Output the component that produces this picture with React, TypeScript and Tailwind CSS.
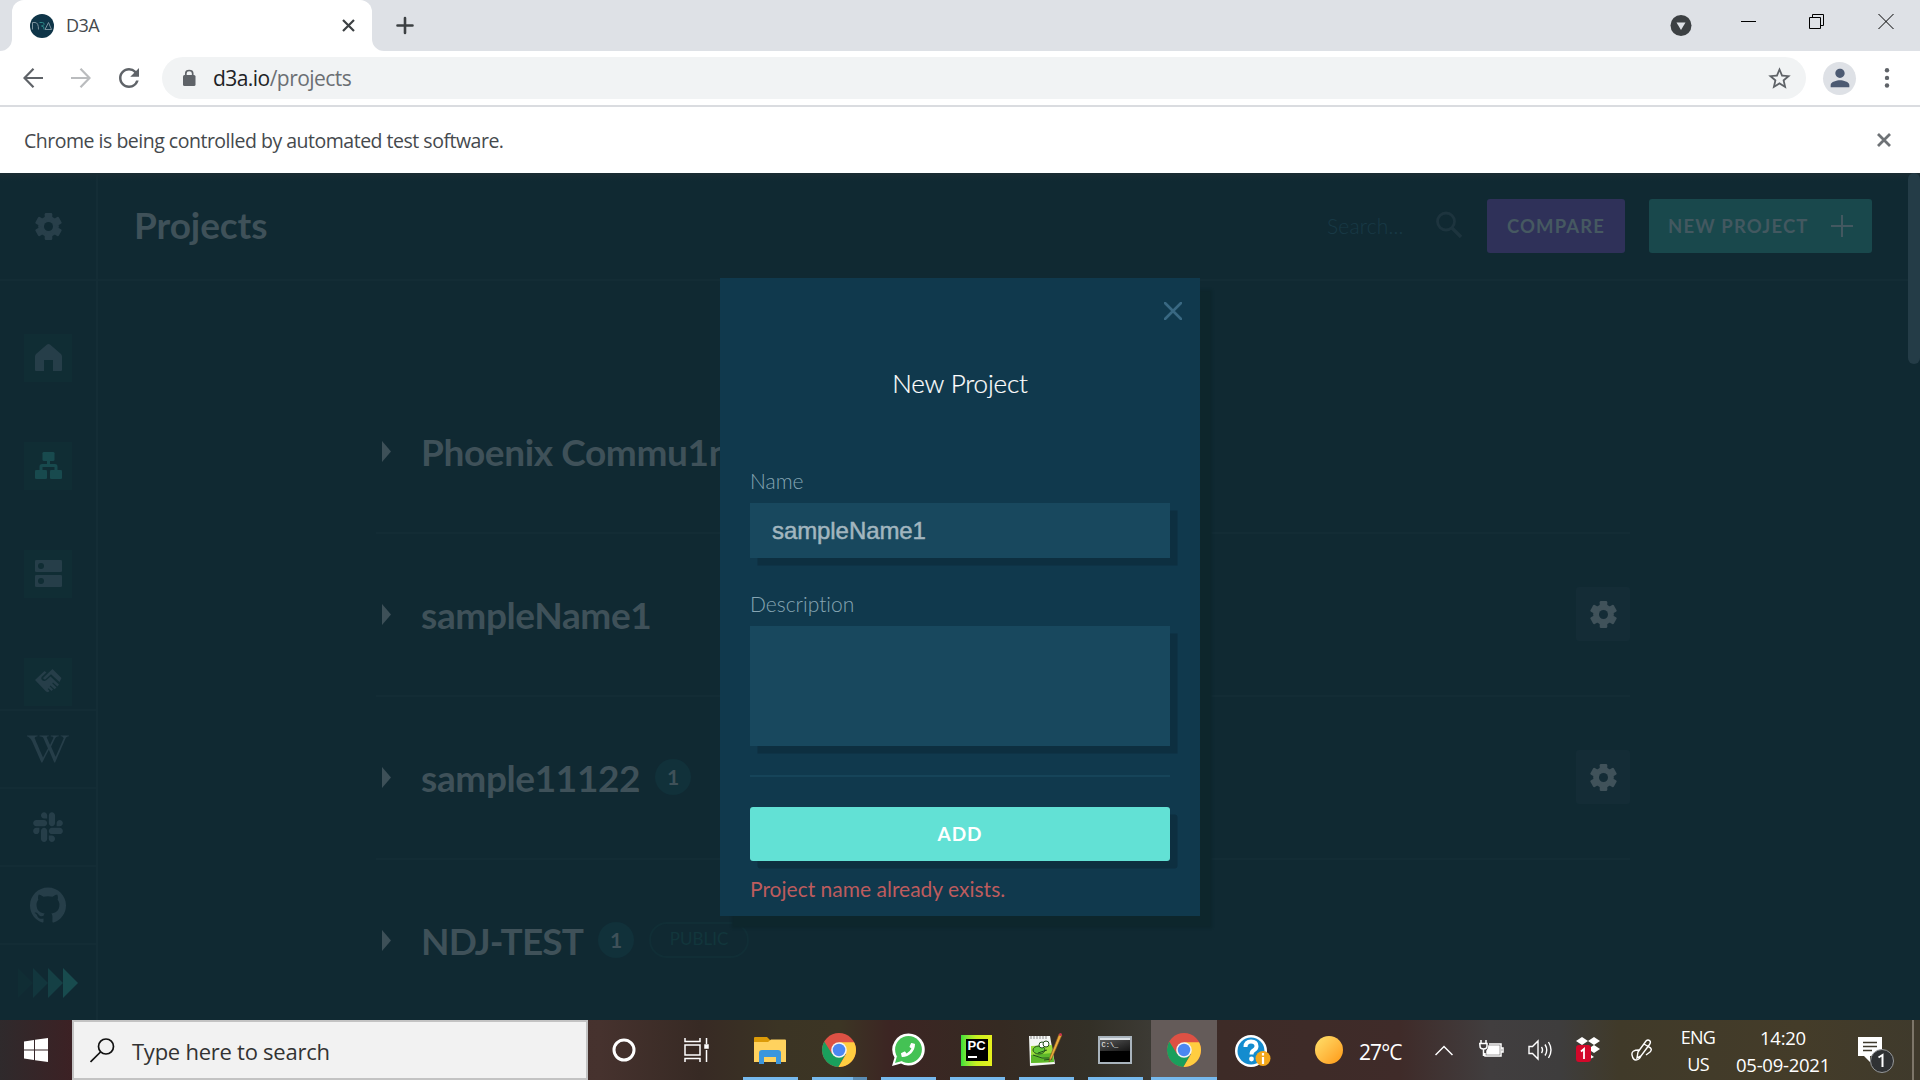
import React from "react";
import { FaSlack, FaWikipediaW, FaPhoneAlt } from "react-icons/fa";
import { SiGithub } from "react-icons/si";
import { MdStarBorder, MdPerson, MdRefresh } from "react-icons/md";

const UI = "font-['Open_Sans','Noto_Sans',sans-serif]";

function Cross({ size, w, color, cap = "butt" }: { size: number; w: number; color: string; cap?: "butt" | "round" }) {
  return (
    <svg width={size} height={size} viewBox={`0 0 ${size} ${size}`} stroke={color} strokeWidth={w} strokeLinecap={cap} className="block shrink-0">
      <path d={`M1 1L${size - 1} ${size - 1}M${size - 1} 1L1 ${size - 1}`} />
    </svg>
  );
}

function TabStrip() {
  return (
    <div className="flex h-[51px] items-start bg-[#dee1e6]">
      <svg width="12" height="51" className="block shrink-0"><path d="M12 39V51H0A12 12 0 0 0 12 39Z" fill="#fff" /></svg>
      <div className="flex h-[51px] w-[360px] items-center rounded-t-[12px] bg-white pl-[18px]">
        <svg width="24" height="24" viewBox="0 0 24 24" fill="none" strokeWidth="1">
          <circle cx="12" cy="12" r="12" fill="#0f3548" />
          <path d="M2.500 15.500V8.500H5Q8.500 8.500 8.500 15.500" stroke="#7b929d" />
          <path d="M9.500 8.500H12.500Q14.500 8.800 14 10.500Q13.500 12 11.500 12Q14.500 12 14 15.500" stroke="#2d8787" />
          <path d="M15 15.500L18.500 8.500L21.500 15.500Z" stroke="#7b929d" />
        </svg>
        <span className={`${UI} mb-[1px] ml-[12px] flex-1 text-[18px] leading-6 tracking-[-0.600px] text-[#45494d]`}>D3A</span>
        <div className="mr-[17px]"><Cross size={13} w={2.200} color="#3c4043" /></div>
      </div>
      <svg width="12" height="51" className="block shrink-0"><path d="M0 39V51H12A12 12 0 0 1 0 39Z" fill="#fff" /></svg>
      <svg width="18" height="51" className="ml-3 block" stroke="#3c4043" strokeWidth="2.600" strokeLinecap="round"><path d="M1.500 25.500H16.500M9 18V33" /></svg>
      <div className="flex-1" />
      <svg width="22" height="51" className="mr-[49px] block"><circle cx="11" cy="25.500" r="10.500" fill="#3c4043" /><path d="M6.500 22.500H15.500L11 30Z" fill="#dee1e6" /></svg>
      <svg width="16" height="51" className="mr-[52px] block"><path d="M0 21.500H15" stroke="#000" /></svg>
      <svg width="16" height="51" className="mr-[53px] block" fill="none" stroke="#000"><path d="M0.500 17.500H11.500V28.500H0.500ZM3.500 17.500V14.500H14.500V25.500H11.500" /></svg>
      <svg width="16" height="51" className="mr-[26px] block" stroke="#000"><path d="M0.500 14L15.500 29M15.500 14L0.500 29" /></svg>
    </div>
  );
}

function Toolbar() {
  return (
    <div className="flex h-[56px] items-center border-b-2 border-[#dadce0] bg-white">
      <svg width="20" height="20" className="ml-[23px]" fill="none" stroke="#5f6368" strokeWidth="2.200"><path d="M20 10H1.500M10.500 0.800L1.500 10L10.500 19.200" /></svg>
      <svg width="20" height="20" className="ml-[28px]" fill="none" stroke="#babcbe" strokeWidth="2.200"><path d="M0 10H18.500M9.500 0.800L18.500 10L9.500 19.200" /></svg>
      <MdRefresh className="ml-[23px] size-[30px] text-[#5f6368]" />
      <div className="ml-[18px] flex h-[42px] w-[1644px] items-center rounded-full bg-[#f1f3f4] pl-[17px] pr-[13px]">
        <svg width="20" height="20" viewBox="0 0 20 20"><rect x="4" y="7" width="12.500" height="11" rx="1.500" fill="#5f6368" /><path d="M6.800 8V5.500Q6.800 2.500 10.200 2.500Q13.700 2.500 13.700 5.500V8" fill="none" stroke="#5f6368" strokeWidth="1.700" /></svg>
        <span className={`${UI} ml-[14px] flex-1 text-[21px] leading-8 tracking-[-0.550px] text-[#6b6f73]`}>
          <span className="text-[#202124]">d3a.io</span>/projects
        </span>
        <MdStarBorder className="size-[27px] text-[#5f6368]" />
      </div>
      <div className="ml-[17px] flex size-[33px] items-center justify-center rounded-full bg-[#dee1e6]">
        <MdPerson className="size-[28px] text-[#4c5a72]" />
      </div>
      <svg width="6" height="22" className="ml-[28px]" fill="#5f6368"><circle cx="3" cy="3.200" r="2.200" /><circle cx="3" cy="10.900" r="2.200" /><circle cx="3" cy="18.500" r="2.200" /></svg>
    </div>
  );
}

function InfoBar() {
  return (
    <div className="flex h-[66px] items-center justify-between bg-white pl-6 pr-[29px]">
      <span className={`${UI} mt-[2px] text-[19.500px] tracking-[-0.490px] text-[#45494d]`}>Chrome is being controlled by automated test software.</span>
      <Cross size={14} w={2.800} color="#6e7276" />
    </div>
  );
}

function Gear({ color, hole }: { color: string; hole: string }) {
  return (
    <svg width="27" height="27" viewBox="-13.500 -13.500 27 27" fill={color} className="block">
      <circle r="10.300" />
      {[0, 60, 120].map((a) => (
        <rect key={a} x="-3.800" y="-13.500" width="7.600" height="27" rx="1.300" transform={`rotate(${a})`} />
      ))}
      <circle r="4.500" fill={hole} />
    </svg>
  );
}

function SideBox({ children }: { children: React.ReactNode }) {
  return <div className="mb-[60px] ml-6 flex size-12 items-start bg-[#102d34] pl-[11px] pt-[10px]">{children}</div>;
}

function Sidebar() {
  return (
    <div className="flex w-[98px] flex-col border-r-2 border-[#142d36]">
      <div className="h-[108px] shrink-0 border-b-2 border-[#132c35] pl-[35px] pt-[40px]"><Gear color="#283f4a" hole="#102932" /></div>
      <div className="h-[428px] shrink-0 overflow-hidden pt-[53px]">
        <SideBox>
          <svg width="27" height="27" fill="#263e49"><path d="M12 .5Q13.500-.5 15 .5L26 10Q27 11 27 12.500V26Q27 27 26 27H18V16H9V27H1Q0 27 0 26V12.500Q0 11 1 10Z" /></svg>
        </SideBox>
        <SideBox>
          <svg width="27" height="27" fill="#184a4e">
            <rect x="7.500" width="12" height="9" rx="1.300" /><rect y="18" width="12" height="9" rx="1.300" /><rect x="15" y="18" width="12" height="9" rx="1.300" />
            <path d="M6 18V14.500Q6 13.500 7 13.500H20Q21 13.500 21 14.500V18M13.500 9V13.500" fill="none" stroke="#184a4e" strokeWidth="3" />
          </svg>
        </SideBox>
        <SideBox>
          <svg width="27" height="27" fill="#263e49">
            <rect width="27" height="12" rx="1.200" /><rect y="15" width="27" height="12" rx="1.200" />
            <circle cx="6" cy="6" r="3" fill="#102d34" /><circle cx="6" cy="21" r="3" fill="#102d34" />
          </svg>
        </SideBox>
        <SideBox>
          <svg width="27" height="25" viewBox="0 -1 27 25" fill="#263e49">
            <path d="M0 11L9.500 2L11.500 3.500L6.500 8Q5.500 10 7.500 11.500Q9.500 12.500 11.500 11L15.500 7.500L24 15.500L22.500 17.500L18 13.500L17.200 14.300L21.500 18.500L19.500 20.300L15.500 16.500L14.700 17.300L18 20.500L16.500 22L13.500 19.300L12.700 20L14.500 22L13 23.200L11 22.500Z" />
            <path d="M8 9L17.500 0L26.500 9L24.500 13L16 5.200L10.500 10.200Q9 11 8 9Z" />
          </svg>
        </SideBox>
      </div>
      <div className="flex h-[78px] shrink-0 items-center justify-center border-t-2 border-[#132c35]"><FaWikipediaW className="size-[42px] text-[#263e49]" /></div>
      <div className="flex h-[78px] shrink-0 items-center justify-center border-t-2 border-[#132c35]"><FaSlack className="size-[34px] text-[#263e49]" /></div>
      <div className="flex h-[78px] shrink-0 items-center justify-center border-t-2 border-[#132c35]"><SiGithub className="size-[36px] text-[#263e49]" /></div>
      <div className="flex h-[77px] shrink-0 justify-center border-t-2 border-[#132c35] pt-[23px]">
        <svg width="60" height="30">
          <path d="M0 0L15 15L0 30Z" fill="#102d34" /><path d="M15 0L30 15L15 30Z" fill="#12363d" />
          <path d="M30 0L45 15L30 30Z" fill="#154045" /><path d="M45 0L60 15L45 30Z" fill="#184b4e" />
        </svg>
      </div>
    </div>
  );
}

function Row({ name, count, pub, gear, tight }: { name: string; count?: string; pub?: boolean; gear?: boolean; tight?: boolean }) {
  return (
    <div className="flex h-[163px] items-center border-b-2 border-[#132c35] pl-[6px]">
      <svg width="9" height="21" fill="#3d5058" className="mb-[1px] shrink-0"><path d="M0 0L9 10.500L0 21Z" /></svg>
      <span className={`ml-[30px] whitespace-nowrap text-[37px] font-bold leading-[44px] ${tight ? "tracking-[-0.850px]" : "tracking-[-0.380px]"}`}>{name}</span>
      {count && <span className="mb-[1px] ml-[15px] flex size-9 items-center justify-center rounded-full bg-[#11313a] text-[21px] font-bold">{count}</span>}
      {pub && <span className="mb-[1px] ml-[15px] flex h-9 w-[100px] items-center justify-center rounded-full border-2 border-[#112e36] pb-[3px] text-[17px] leading-none text-[#12363c]">PUBLIC</span>}
      {gear && <div className="mb-[1px] ml-auto flex size-[54px] items-center justify-center rounded-[3px] bg-[#142c36]"><Gear color="#40525a" hole="#142c36" /></div>}
    </div>
  );
}

function Main() {
  return (
    <div className="flex-1">
      <header className="flex h-[108px] items-center border-b-2 border-[#132c35] pl-[36px] pr-[48px]">
        <h1 className="mb-[2px] text-[37px] font-bold leading-[44px] tracking-[-0.100px]">Projects</h1>
        <span className="ml-auto w-[109px] text-[21px] font-light tracking-[0.150px] text-[#183946]">Search...</span>
        <svg width="26" height="27" className="mb-1" fill="none" stroke="#1d343e" strokeWidth="2.800"><circle cx="10" cy="10.500" r="8.500" /><path d="M16 17L25 26" strokeWidth="3.400" /></svg>
        <button className="ml-[25px] h-[54px] w-[138px] rounded-[3px] bg-[#2f3159] pt-[1px] text-[18.500px] font-bold tracking-[1.100px] text-[#465961]">COMPARE</button>
        <button className="ml-6 flex h-[54px] w-[223px] items-center rounded-[3px] bg-[#19484c] pl-[19px] text-[18.500px] font-bold tracking-[1.150px] text-[#435860]">
          <span className="pt-[1px]">NEW PROJECT</span>
          <svg width="22" height="22" className="ml-auto mr-[19px]" stroke="#435860" strokeWidth="2"><path d="M0 11H22M11 0V22" /></svg>
        </button>
      </header>
      <div className="ml-[278px] mt-[90px] w-[1254px]">
        <Row name="Phoenix Commu1n" />
        <Row name="sampleName1" gear />
        <Row name="sample11122" count="1" gear />
        <Row name="NDJ-TEST" count="1" pub tight />
      </div>
    </div>
  );
}

function Modal() {
  const shadow = "shadow-[7.5px_7.5px_0_#0d2f40]";
  return (
    <div className="absolute left-[720px] top-[105px] h-[638px] w-[480px] bg-[#10394d] px-[30px] text-[21px] leading-[26px] shadow-[12px_12px_2px_#0d262c]">
      <div className="flex h-[84px] justify-end pt-6">
        <div className="-mr-[11.500px]"><Cross size={18} w={2.600} color="#396882" cap="round" /></div>
      </div>
      <h2 className="h-[106px] pt-[5px] text-center text-[26px] font-light leading-[32px] tracking-[-0.150px] text-white [-webkit-text-stroke:0.200px_#fff]">New Project</h2>
      <label className="block h-[35px] font-light text-[#86a5b3]">Name</label>
      <div className={`flex h-[55px] items-center bg-[#18485e] pl-[22px] font-['Liberation_Sans',Arial,sans-serif] text-[24px] tracking-[-0.080px] text-[#a2b6bf] [-webkit-text-stroke:0.500px_#a2b6bf] ${shadow}`}>sampleName1</div>
      <label className="mt-[33px] block h-[35px] font-light text-[#86a5b3] [font-variant-ligatures:none]">Description</label>
      <div className={`h-[120px] bg-[#18485e] ${shadow}`} />
      <div className="mt-[29px] h-[2px] bg-[#164459]" />
      <button className={`mt-[30px] block h-[54px] w-full rounded-[3px] bg-[#62e1d5] text-[19px] font-bold tracking-[1px] text-white ${shadow}`}>ADD</button>
      <p className="mt-[15px] text-[#bd5c5e]">Project name already exists.</p>
    </div>
  );
}

function Chrome() {
  return (
    <svg width="34" height="34" viewBox="0 0 48 48">
      <circle cx="24" cy="24" r="24" fill="#dd5144" />
      <path d="M24 13H45.300A24 24 0 0 1 23 48L34 29.500Z" fill="#ffcd40" />
      <path d="M3.200 12A24 24 0 0 0 23 48L33.500 29.500L24 24L14.500 30Z" fill="#1a9f5c" />
      <circle cx="24" cy="24" r="11" fill="#f4f4f4" /><circle cx="24" cy="24" r="8.800" fill="#4b87f2" />
    </svg>
  );
}

function Explorer() {
  return (
    <svg width="32" height="28" viewBox="0 0 32 28">
      <path d="M0 2Q0 1 1 1H13L16 4V8H0Z" fill="#dc9b08" /><path d="M0 6H14L17 3.500H31Q32 3.500 32 4.500V26H0Z" fill="#ffd25e" />
      <path d="M5 28V17Q5 14 8 14H24Q27 14 27 17V28H22V21H10V28Z" fill="#3c96dd" />
    </svg>
  );
}

function WhatsApp() {
  return (
    <div className="grid place-items-center">
      <svg width="34" height="34" viewBox="0 0 34 34" className="[grid-area:1/1]">
        <path d="M17.500.5A16 16 0 1 1 10 30.500L1 33L3.500 24.500A16 16 0 0 1 17.500.5Z" fill="#fff" />
        <circle cx="17.500" cy="16.500" r="13.400" fill="#44c254" /><path d="M4 30L6 23L11 28Z" fill="#44c254" />
      </svg>
      <FaPhoneAlt className="size-[14px] -scale-x-100 text-white [grid-area:1/1]" />
    </div>
  );
}

function PyCharm() {
  return (
    <div className="flex size-[31px] items-center justify-center bg-linear-to-r from-[#36e03a] via-[#c8f020] to-[#e6f01e]">
      <div className="flex size-[22px] flex-col bg-black pl-[2px] font-['Liberation_Sans',sans-serif] text-[13px] font-bold leading-[14px] text-white">
        PC<span className="mt-[3px] h-[2px] w-[9px] bg-white" />
      </div>
    </div>
  );
}

function Notepad() {
  return (
    <svg width="36" height="34" viewBox="0 0 36 34">
      <path d="M1 3H22L27 31L2 33Z" fill="#f4f6f4" /><path d="M3 13L24 12L26 29L3 30Z" fill="#9adb3c" /><path d="M3 22L25 20L26 29L3 30Z" fill="#5db82a" />
      <path d="M3 3V6M6 3V6M9 3V6M12 3V6M15 3V6M18 3V6" stroke="#888" />
      <g fill="#65c93a" stroke="#24501a"><ellipse cx="11" cy="17" rx="6" ry="4" /><circle cx="14" cy="12" r="3" fill="#fff" /><circle cx="18" cy="11" r="3" fill="#fff" /><path d="M5 22L14 25L21 25M10 20L19 17M16 27L24 26" /></g>
      <path d="M34 2L24 25L21 29L22 24L31 1Z" fill="#e9a83a" stroke="#7b4f1c" strokeWidth=".6" /><circle cx="32.500" cy="1.500" r="1.500" fill="#c8344a" />
    </svg>
  );
}

function Terminal() {
  return (
    <div className="flex h-[28px] w-[34px] flex-col border-2 border-[#a9b4bd] bg-black">
      <div className="h-[2px] bg-[#dde3e8]" />
      <div className="h-[11px] bg-linear-to-br from-[#5a5a5a] to-[#151515] pl-[2px] font-['Liberation_Mono',monospace] text-[7px] leading-[10px] text-white">C:\_</div>
    </div>
  );
}

function Task({ children, active, split }: { children: React.ReactNode; active?: boolean; split?: boolean }) {
  return (
    <div className={active ? "flex h-[60px] w-[66px] flex-col bg-[#645b59]" : "mr-[14px] flex h-[60px] w-[55px] flex-col"}>
      <div className={active ? "flex flex-1 items-center justify-center pt-[3px]" : "flex flex-1 items-center justify-center pr-[2px] pt-[3px]"}>{children}</div>
      <div className="flex h-[3px] bg-[#76b9ed]">{split && <div className="ml-[41px] w-[14px] bg-[#5a8cb4]" />}</div>
    </div>
  );
}

function Taskbar() {
  return (
    <div className={`${UI} flex h-[60px] items-center overflow-hidden bg-[linear-gradient(90deg,#2f2a2c_0,#3c2124_72px,#46322e_600px,#372a24_700px,#3b3424_780px,#3c3524_840px,#3c2523_890px,#352a22_1000px,#333027_1090px,#3c3a34_1150px,#3d2b27_1220px,#3f2b29_1400px,#413e3f_1490px,#3e3d3d_1560px,#403a29_1620px,#443c29_1800px,#3f3a2c_1920px)] text-white`}>
      <div className="flex w-[72px] justify-center">
        <svg width="24" height="24" fill="#fff"><path d="M0 3.400L10 2V11.500H0ZM11 1.800L24 0V11.500H11ZM0 12.500H10V22L0 20.600ZM11 12.500H24V24L11 22.200Z" /></svg>
      </div>
      <div className="flex h-[60px] w-[516px] items-center border-2 border-[#c3c3c3] bg-[#f2f2f2] pl-4">
        <svg width="25" height="25" fill="none" stroke="#111" strokeWidth="1.700"><circle cx="16" cy="8.500" r="7.500" /><path d="M10.500 14L.5 24" /></svg>
        <span className="ml-[17px] mt-[2px] text-[22px] tracking-[-0.250px] text-[#333]">Type here to search</span>
      </div>
      <svg width="24" height="24" className="ml-6"><circle cx="12" cy="12" r="10" fill="none" stroke="#fff" strokeWidth="3" /></svg>
      <svg width="25" height="24" className="ml-12 mr-[34px]" fill="none" stroke="#fff" strokeWidth="1.500"><path d="M1 0V3.500H16V0M1 7H16V17H1ZM1 24V20.500H16V24M22.500 0V6M22.500 12V24" /><path d="M21 7H24V10H21Z" fill="#fff" /></svg>
      <Task><Explorer /></Task>
      <Task split><Chrome /></Task>
      <Task><WhatsApp /></Task>
      <Task><PyCharm /></Task>
      <Task><Notepad /></Task>
      <div className="-mr-[6px]"><Task><Terminal /></Task></div>
      <Task active><Chrome /></Task>
      <svg width="37" height="34" className="ml-[18px] mt-[4px]">
        <circle cx="16" cy="16" r="16" fill="#fff" /><circle cx="16" cy="16" r="13.500" fill="#148ccf" />
        <path d="M10.500 12Q10.500 6.500 16 6.500Q21.500 6.500 21.500 11.200Q21.500 13.800 18.500 15.500Q16.500 16.700 16.500 19.500" fill="none" stroke="#fff" strokeWidth="4" /><circle cx="16.500" cy="24" r="2.400" fill="#fff" />
        <circle cx="28" cy="23.500" r="7.500" fill="#f3a71b" /><path d="M28 22V29M28 18V20.500" stroke="#fff" strokeWidth="2.200" />
      </svg>
      <div className="ml-[43px] size-[28px] rounded-full bg-linear-to-br from-[#ffe16a] to-[#ff9800]" />
      <span className="ml-[16px] mt-[5px] w-[76px] text-[21px] tracking-[-0.900px]">27°C</span>
      <svg width="18" height="11" fill="none" stroke="#fff" strokeWidth="1.500"><path d="M.5 10L9 1.500L17.500 10" /></svg>
      <svg width="25" height="20" className="ml-[26px]" fill="none" stroke="#fff" strokeWidth="1.500"><path d="M10 4H22V16H6V13M22 8H24V12H22M2 0V3M7 0V3M0.800 3.500H8V6Q8 9 4.500 9Q1 9 1 6ZM4.500 9V16" /><path d="M10 6H20V14H8V11Q10 9 10 6Z" fill="#fff" /></svg>
      <svg width="25" height="22" className="ml-6" fill="none" stroke="#fff" strokeWidth="1.400"><path d="M1 7.500H4.500L10 2V20L4.500 14.500H1ZM13.500 8Q15.500 11 13.500 14M17 5.500Q20.500 11 17 16.500M20.500 3Q25.500 11 20.500 19" /></svg>
      <svg width="24" height="30" className="mb-[2px] ml-[23px]">
        <path d="M6 3L12 7L6 11L0 7ZM18 3L24 7L18 11L12 7ZM18 11L24 15L18 19L12 15ZM12 19L18 23L12 26L6 23Z" fill="#fff" />
        <rect y="11" width="15" height="17" rx="3" fill="#d3082a" /><path d="M5 17.500L8 15V25" stroke="#fff" strokeWidth="1.800" fill="none" />
      </svg>
      <svg width="22" height="24" className="ml-[31px]" fill="none" stroke="#fff" strokeWidth="1.400"><path d="M7 14L15 3Q17 1 19 3Q20 4.500 18.500 6.500L10 18L6 20ZM8 12Q0 12 1 17Q2 22 5 22Q8 22 10 18M13 6L18 9Q22 11 19 14L15 17" /></svg>
      <div className="ml-[25px] mt-[1px] flex w-[40px] flex-col items-center text-[18px] leading-[27px] tracking-[-0.700px]"><span>ENG</span><span>US</span></div>
      <div className="ml-[14px] mt-[1px] flex w-[102px] flex-col items-center whitespace-nowrap text-[18.500px] leading-[27px] tracking-[-0.250px]"><span>14:20</span><span>05-09-2021</span></div>
      <svg width="38" height="40" className="ml-[24px] mt-[12px]">
        <path d="M0 1H24V20H12V26L6 20H0Z" fill="#fff" /><path d="M5 6.500H19M5 10.500H19M5 14.500H14" stroke="#3f3a2c" strokeWidth="1.300" />
        <circle cx="24" cy="25" r="11.500" fill="#303234" stroke="#96989a" /><path d="M20.500 21.500L24.500 19V31" fill="none" stroke="#fff" strokeWidth="2" />
      </svg>
      <div className="ml-[16px] h-[60px] w-[2px] bg-[#7d7669]" />
    </div>
  );
}

export default function App() {
  return (
    <div className="flex h-[1080px] w-[1920px] flex-col overflow-hidden">
      <TabStrip />
      <Toolbar />
      <InfoBar />
      <div className="relative flex h-[847px] overflow-hidden bg-[#102932] font-['Lato',sans-serif] text-[#3f5159]">
        <Sidebar />
        <Main />
        <div className="absolute inset-x-0 top-0 h-[8px] bg-linear-to-b from-[#1b2c33] to-transparent" />
        <div className="absolute right-0 top-0 h-[191px] w-[12px] rounded-full bg-[#243c47]" />
        <Modal />
      </div>
      <Taskbar />
    </div>
  );
}
